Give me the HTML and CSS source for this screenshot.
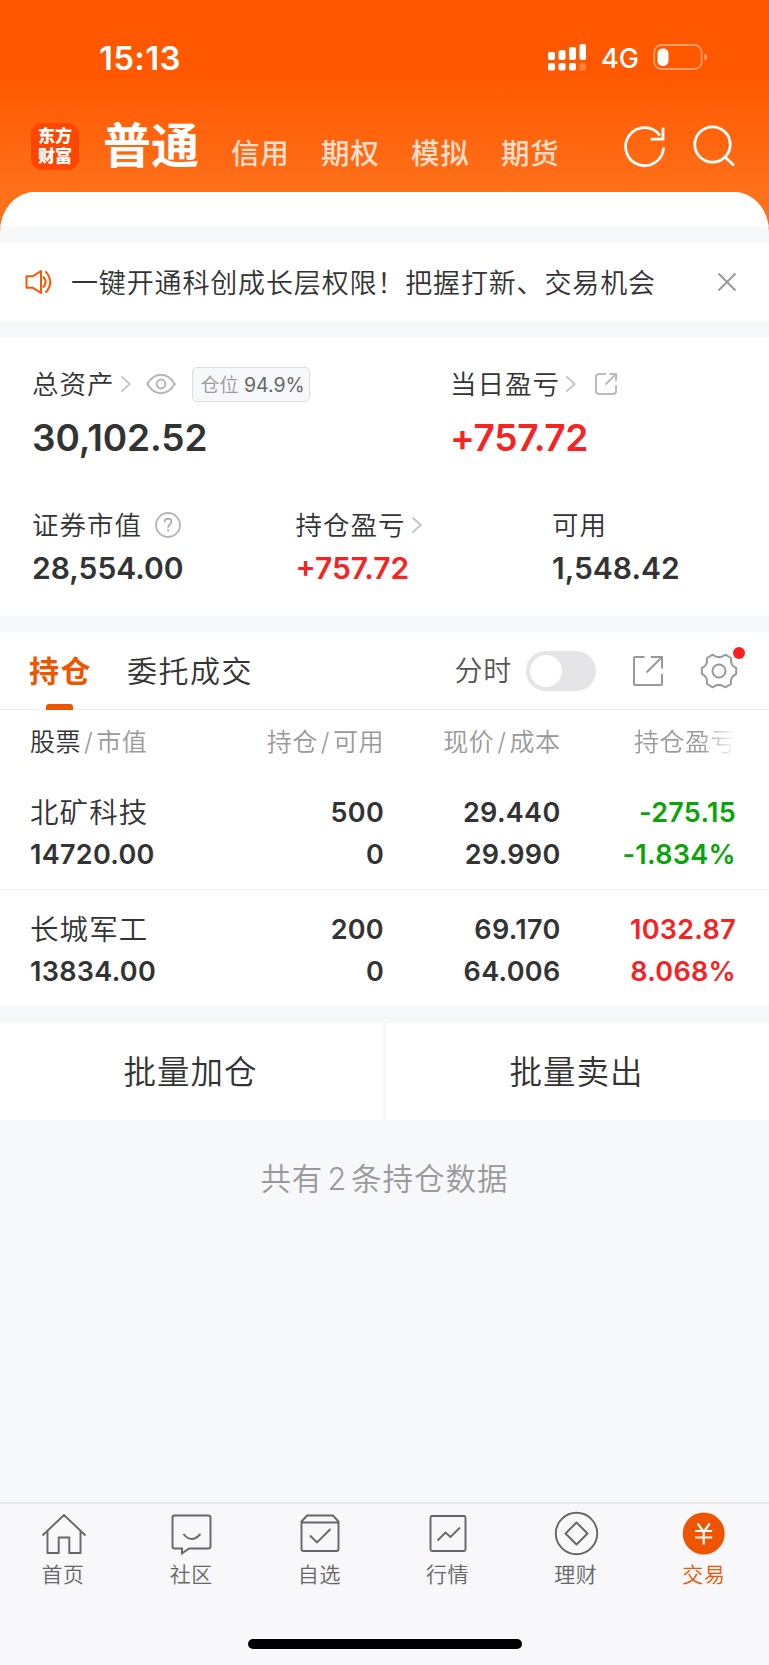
FILE: index.html
```html
<!DOCTYPE html>
<html lang="zh-CN">
<head>
    <meta charset="UTF-8">
    <meta name="viewport" content="width=device-width, initial-scale=1.0">
    <title>交易</title>
    <link rel="stylesheet" href="styles.css">
</head>
<body>
    <header class="header">
        <!-- Phone status bar -->
        <div class="status">
            <span class="time">15:13</span>
            <svg class="signal" width="40" height="28" viewBox="0 0 40 28" fill="#fff">
                <rect x="1" y="9" width="7" height="8" rx="2"/>
                <rect x="11.5" y="7" width="7" height="10" rx="2"/>
                <rect x="22" y="4" width="7" height="13" rx="2"/>
                <rect x="32.5" y="1" width="6.5" height="16" rx="2"/>
                <rect x="1" y="20" width="7" height="7.5" rx="2"/>
                <rect x="11.5" y="20" width="7" height="7.5" rx="2"/>
                <rect x="22" y="20" width="7" height="7.5" rx="2"/>
                <rect x="32.5" y="20" width="6.5" height="7.5" rx="2" opacity=".25"/>
            </svg>
            <span class="network">4G</span>
            <svg class="battery" width="56" height="28" viewBox="0 0 56 28">
                <rect x="1.2" y="2" width="47.5" height="24" rx="7.5" fill="none" stroke="#fff" stroke-opacity=".42" stroke-width="1.8"/>
                <rect x="4.5" y="5.5" width="11" height="17.5" rx="5" fill="#fff"/>
                <path d="M51.5 10.500v7q2.600-1 2.600-3.500t-2.600-3.500z" fill="#fff" opacity=".5"/>
            </svg>
        </div>

        <!-- Account types -->
        <nav class="accounts">
            <div class="logo"><span>东方</span><span>财富</span></div>
            <span class="account-current">普通</span>
            <span class="account">信用</span>
            <span class="account">期权</span>
            <span class="account">模拟</span>
            <span class="account">期货</span>
            <div class="header-icons">
                <svg width="42" height="44" viewBox="0 0 42 44" fill="none" stroke="#fff" stroke-width="2.800">
                    <path d="M39.600 23.500A19 19 0 1 1 36 11.500M39 3.500V15.200H26.700"/>
                </svg>
                <svg width="42" height="44" viewBox="0 0 42 44" fill="none" stroke="#fff" stroke-width="2.800">
                    <circle cx="19.500" cy="20.500" r="17.700"/>
                    <path d="M31.500 32.500L41 41.500"/>
                </svg>
            </div>
        </nav>
    </header>

    <main class="content">
        <div class="sheet-top"></div>

        <section class="notice">
            <svg width="28" height="26" viewBox="0 0 28 26" fill="none" stroke="#ff5500" stroke-width="2">
                <path d="M1.500 7.200H8L16 2v22l-8-5.200H1.500z" stroke-linejoin="round"/>
                <path d="M18 7.500q5.200 5.500 0 11M20.500 2.300q9.500 10.700 0 21.400"/>
            </svg>
            <span class="notice-text">一键开通科创成长层权限！把握打新、交易机会</span>
            <svg class="close" width="20" height="20" viewBox="0 0 20 20" fill="none" stroke="#999" stroke-width="2">
                <path d="M1.500 1.500l17 17M18.500 1.500l-17 17"/>
            </svg>
        </section>

        <section class="assets">
            <div class="assets-main">
                <div class="asset">
                    <div class="label"><span>总资产</span>
                        <svg class="arrow" width="12" height="18" viewBox="0 0 12 18"><path d="M1.500 1.500L9.700 9l-8.200 7.500"/></svg>
                        <svg class="eye" width="30" height="22" viewBox="0 0 30 22" fill="none" stroke="#b5b5b5" stroke-width="2">
                            <path d="M1.200 11Q7 1.800 15 1.800T28.800 11Q23 20.200 15 20.200T1.200 11z"/>
                            <circle cx="15" cy="11" r="4.400"/>
                        </svg>
                        <div class="ratio"><i>仓位</i> 94.9%</div>
                    </div>
                    <div class="amount-big">30,102.52</div>
                </div>
                <div class="asset">
                    <div class="label"><span>当日盈亏</span>
                        <svg class="arrow" width="12" height="18" viewBox="0 0 12 18"><path d="M1.500 1.500L9.700 9l-8.200 7.500"/></svg>
                        <svg class="share" width="24" height="24" viewBox="0 0 24 24" fill="none" stroke="#bbb" stroke-width="2">
                            <path d="M12 2H5Q2 2 2 5v14q0 3 3 3h14q3 0 3-3v-6M15.500 2H22v7M22 2L11.500 12.500"/>
                        </svg>
                    </div>
                    <div class="amount-big profit red">+757.72</div>
                </div>
            </div>
            <div class="assets-sub">
                <div class="asset">
                    <div class="label"><span>证券市值</span>
                        <svg class="help" width="26" height="26" viewBox="0 0 26 26">
                            <circle cx="13" cy="13" r="12" fill="none" stroke="#b5b5b5" stroke-width="1.800"/>
                            <path d="M9.700 10.300q0-3.600 3.400-3.600 3.300 0 3.300 3.100 0 1.700-1.700 3-1.600 1.200-1.600 2.900M13.100 17.400v2.100" fill="none" stroke="#aaa" stroke-width="1.700"/>
                        </svg>
                    </div>
                    <div class="amount">28,554.00</div>
                </div>
                <div class="asset">
                    <div class="label"><span>持仓盈亏</span>
                        <svg class="arrow" width="12" height="18" viewBox="0 0 12 18"><path d="M1.500 1.500L9.700 9l-8.200 7.500"/></svg>
                    </div>
                    <div class="amount red">+757.72</div>
                </div>
                <div class="asset">
                    <div class="label"><span>可用</span></div>
                    <div class="amount">1,548.42</div>
                </div>
            </div>
        </section>

        <section class="positions">
            <div class="tabs">
                <div class="tab active">持仓</div>
                <div class="tab">委托成交</div>
                <div class="tools">
                    <span class="tool-label">分时</span>
                    <div class="toggle"></div>
                    <svg class="export" width="32" height="32" viewBox="0 0 32 32" fill="none" stroke="#999" stroke-width="2">
                        <path d="M12.500 2H3Q2 2 2 3v26q0 1 1 1h26q1 0 1-1V19M19 2h11v11.500M30 2L14.500 17.500"/>
                    </svg>
                    <div class="settings">
                        <svg width="38" height="38" viewBox="0 0 38 38" fill="none" stroke="#999" stroke-width="2">
                            <path d="M12.700 2.700Q19 7.500 25.300 2.700L31 6Q30 13.500 36.200 16v6Q30 24.500 31 32l-5.700 3.300Q19 30.500 12.700 35.300L7 32Q8 24.500 1.800 22v-6Q8 13.500 7 6z" stroke-linejoin="round"/>
                            <circle cx="19" cy="19" r="6.500"/>
                        </svg>
                        <span class="dot"></span>
                    </div>
                </div>
            </div>

            <div class="row table-head">
                <div><b>股票</b><i>/</i>市值</div>
                <div>持仓<i>/</i>可用</div>
                <div>现价<i>/</i>成本</div>
                <div class="fade">持仓盈亏</div>
            </div>
            <div class="row stock">
                <div><span class="name">北矿科技</span><span>14720.00</span></div>
                <div><span>500</span><span>0</span></div>
                <div><span>29.440</span><span>29.990</span></div>
                <div class="green"><span>-275.15</span><span>-1.834%</span></div>
            </div>
            <div class="row stock">
                <div><span class="name">长城军工</span><span>13834.00</span></div>
                <div><span>200</span><span>0</span></div>
                <div><span>69.170</span><span>64.006</span></div>
                <div class="red"><span>1032.87</span><span>8.068%</span></div>
            </div>
        </section>

        <section class="batch">
            <div>批量加仓</div>
            <div>批量卖出</div>
        </section>
        <p class="summary">共有<span>2</span>条持仓数据</p>
    </main>

    <!-- Bottom navigation -->
    <footer class="footer">
        <nav class="menu">
            <div class="menu-item">
                <svg width="46" height="46" viewBox="0 0 46 46">
                    <path d="M1.500 24.500L23 4l21.500 20.500M6.500 20.500V42h11.200V26.500h10.600V42h11.200V20.500"/>
                </svg>
                <span>首页</span>
            </div>
            <div class="menu-item">
                <svg width="46" height="46" viewBox="0 0 46 46">
                    <path d="M5.500 4.500h34q2 0 2 2v29q0 2-2 2H20l-7 5v-5H5.500q-2 0-2-2v-29q0-2 2-2zM14.500 23q8 10 17 0"/>
                </svg>
                <span>社区</span>
            </div>
            <div class="menu-item">
                <svg width="46" height="46" viewBox="0 0 46 46">
                    <path d="M4.500 10.500l5.500-6h26l5.500 6V38q0 2-2 2h-33q-2 0-2-2zM4.500 11.500h37M13 24.500l7 7L33.500 18"/>
                </svg>
                <span>自选</span>
            </div>
            <div class="menu-item">
                <svg width="46" height="46" viewBox="0 0 46 46">
                    <rect x="4.500" y="5" width="35" height="35" rx="1.500"/>
                    <path d="M11.500 29.500l8-8 5 4.500 9.500-9.500"/>
                </svg>
                <span>行情</span>
            </div>
            <div class="menu-item">
                <svg width="46" height="46" viewBox="0 0 46 46">
                    <circle cx="22.500" cy="22.500" r="20.700"/>
                    <path d="M22.500 11.500l11 11-11 11-11-11z" stroke-linejoin="round"/>
                </svg>
                <span>理财</span>
            </div>
            <div class="menu-item current">
                <svg width="46" height="46" viewBox="0 0 46 46">
                    <circle class="coin" cx="21.700" cy="22.500" r="21"/>
                    <path class="yen" d="M15.700 12.500l6 8.500 6-8.500M21.700 21v12.500M13.200 20h17M13.200 26.500h17"/>
                </svg>
                <span>交易</span>
            </div>
        </nav>
        <div class="home-bar"></div>
    </footer>
</body>
</html>
```

FILE: styles.css
```css
* {
    box-sizing: border-box;
}
body {
    margin: 0;
    height: 1665px;
    display: flex;
    flex-direction: column;
    font-family: Inter, "Noto Sans CJK SC", sans-serif;
    color: #333;
    background: #f7f8fa;
    overflow: hidden;
}
svg {
    display: block;
    flex: none;
}
.red {
    color: #f82222;
}
.green {
    color: #09a409;
}

/* Header */
.header {
    height: 240px;
    flex: none;
    color: #fff;
    background: linear-gradient(#ff5800 75px, #ff7019 190px);
}
.status {
    display: flex;
    align-items: center;
    height: 116px;
    padding-left: 99px;
}
.time {
    width: 448px;
    font-size: 33px;
    font-weight: 600;
    letter-spacing: 0.3px;
}
.signal {
    margin-top: -2px;
}
.network {
    width: 51px;
    margin-left: 14px;
    font-size: 27px;
    font-weight: 500;
}
.battery {
    margin-left: 1px;
    margin-top: -2px;
}
.accounts {
    display: flex;
    align-items: center;
    height: 60px;
    padding-left: 31px;
    white-space: nowrap;
}
.logo {
    display: flex;
    flex-direction: column;
    justify-content: center;
    width: 48px;
    height: 47px;
    border-radius: 11px;
    background: #ff4600;
    font-size: 17px;
    font-weight: 900;
    line-height: 20px;
    text-align: center;
}
.account-current {
    width: 128px;
    margin-left: 24px;
    font-size: 48px;
    font-weight: 700;
    line-height: 60px;
}
.account {
    width: 90px;
    padding-top: 11px;
    font-size: 28.5px;
    font-weight: 500;
    letter-spacing: 0.7px;
    color: rgba(255, 255, 255, 0.8);
}
.header-icons {
    display: flex;
    gap: 27px;
    margin-left: 33px;
}

/* White sheet over the header */
.content {
    flex: 1;
    margin-top: -48px;
    border-radius: 35px 35px 0 0 / 40px 40px 0 0;
    background: #f7f8fa;
    overflow: hidden;
}
.sheet-top {
    height: 35px;
    background: #fff;
}
.notice {
    display: flex;
    align-items: center;
    height: 78px;
    margin: 16px 0;
    padding-left: 25px;
    background: #fff;
}
.notice-text {
    width: 646px;
    margin: -2px 0 0 18px;
    font-size: 27px;
    letter-spacing: 0.85px;
    font-weight: 350;
    white-space: nowrap;
}

/* Assets */
.assets {
    height: 279px;
    padding: 27px 32px 0;
    background: #fff;
}
.assets-main {
    display: grid;
    grid-template-columns: 418px 1fr;
    height: 141px;
}
.assets-sub {
    display: grid;
    grid-template-columns: 263.5px 256.5px 1fr;
}
.label {
    display: flex;
    align-items: center;
    height: 40px;
    font-size: 26.5px;
    font-weight: 350;
    letter-spacing: 1px;
    white-space: nowrap;
}
.label span {
    margin-top: -4px;
}
.arrow {
    margin-left: 5px;
    fill: none;
    stroke: #c4c4c4;
    stroke-width: 1.8;
}
.eye {
    margin-left: 14px;
}
.share {
    margin-left: 17px;
}
.help {
    margin-left: 13px;
    margin-top: -1px;
}
.ratio {
    width: 118px;
    height: 35px;
    margin-left: 16px;
    padding-left: 8px;
    border: 1px solid #dcdcdc;
    border-radius: 5px;
    background: #f7f8fa;
    color: #666;
    font-size: 19.5px;
    font-weight: 400;
    line-height: 34px;
    letter-spacing: 0;
}
.ratio i {
    color: #999;
    font-style: normal;
    font-size: 19px;
    font-weight: 350;
}
.amount-big {
    height: 68px;
    font-size: 37px;
    font-weight: 600;
    line-height: 68px;
    letter-spacing: -0.1px;
}
.profit {
    letter-spacing: -0.3px;
}
.amount {
    font-size: 30px;
    font-weight: 600;
    line-height: 47px;
}

/* Positions */
.positions {
    height: 374px;
    margin-top: 16px;
    background: #fff;
}
.tabs {
    display: flex;
    align-items: center;
    height: 78px;
    padding-left: 29px;
    border-bottom: 1px solid #eee;
}
.tab {
    position: relative;
    margin-right: 35px;
    padding-bottom: 4px;
    font-size: 30px;
    font-weight: 350;
    letter-spacing: 1.5px;
}
.tab.active {
    color: #ef5500;
    font-weight: 700;
}
.tab.active::after {
    content: "";
    position: absolute;
    left: 17px;
    bottom: -15px;
    width: 27px;
    height: 6px;
    border-radius: 3px 3px 0 0;
    background: #ef5500;
}
.tools {
    display: flex;
    align-items: center;
    margin-left: auto;
    padding-right: 31px;
}
.tool-label {
    margin-top: -3px;
    font-size: 28px;
    font-weight: 350;
    letter-spacing: 0.7px;
    color: #555;
}
.toggle {
    width: 70px;
    height: 40px;
    margin-left: 14px;
    padding: 4px;
    border-radius: 20px;
    background: #e5e5e7;
}
.toggle::before {
    content: "";
    display: block;
    width: 32px;
    height: 32px;
    border-radius: 50%;
    background: #fff;
}
.export {
    margin: 0 36px;
}
.settings {
    position: relative;
}
.dot {
    position: absolute;
    top: -5px;
    right: -7px;
    width: 12px;
    height: 12px;
    border-radius: 50%;
    background: #f82222;
}
.row {
    display: grid;
    grid-template-columns: 200px 154px 176.5px 175.5px;
    padding-left: 30px;
    text-align: right;
    white-space: nowrap;
}
.row > div:first-child {
    text-align: left;
}
.table-head {
    height: 63px;
    font-size: 25px;
    font-weight: 350;
    letter-spacing: 0.5px;
    line-height: 64px;
    color: #999;
}
.table-head b {
    color: #333;
    font-weight: 350;
}
.table-head i {
    padding: 0 3px;
    font-style: normal;
}
.fade {
    background: linear-gradient(90deg, #999 80%, #fff);
    background-clip: text;
    -webkit-background-clip: text;
    color: transparent;
}
.stock {
    height: 117px;
    padding-top: 19px;
    border-bottom: 1px solid #eee;
    font-size: 27px;
    font-weight: 600;
    line-height: 42px;
    letter-spacing: 0.3px;
}
.stock:last-child {
    border-bottom: 0;
}
.stock span {
    display: block;
    height: 42px;
}
.stock .name {
    font-size: 28.5px;
    font-weight: 350;
    line-height: 41px;
    letter-spacing: 1.1px;
}

/* Batch buttons */
.batch {
    display: grid;
    grid-template-columns: 1fr 1fr;
    gap: 3px;
    margin-top: 17px;
    font-size: 32.5px;
    font-weight: 350;
    line-height: 100px;
    letter-spacing: 1px;
    text-align: center;
}
.batch div {
    height: 97px;
    padding-right: 2px;
    background: #fff;
}
.summary {
    margin: 38px 0 0;
    font-size: 30.5px;
    font-weight: 350;
    line-height: 42px;
    letter-spacing: 1px;
    text-align: center;
    color: #999;
}
.summary span {
    padding: 0 4px;
}

/* Footer */
.footer {
    height: 163px;
    border-top: 2px solid #e6e7ea;
    background: #f8f8fb;
}
.menu {
    display: grid;
    grid-template-columns: repeat(6, 1fr);
    height: 135px;
    padding-top: 7px;
}
.menu-item {
    display: flex;
    flex-direction: column;
    align-items: center;
    font-size: 21px;
    font-weight: 350;
    line-height: 34px;
    letter-spacing: 0.6px;
    color: #666;
}
.menu-item span {
    margin: 1px 2px 0 0;
}
.menu-item svg {
    fill: none;
    stroke: #666;
    stroke-width: 1.9;
}
.menu-item.current {
    color: #ef5500;
}
.current .coin {
    fill: #ef5500;
    stroke: none;
}
.current .yen {
    stroke: #fff;
    stroke-width: 2.2;
}
.home-bar {
    width: 274px;
    height: 10px;
    margin: 0 auto;
    border-radius: 5px;
    background: #000;
}
```
